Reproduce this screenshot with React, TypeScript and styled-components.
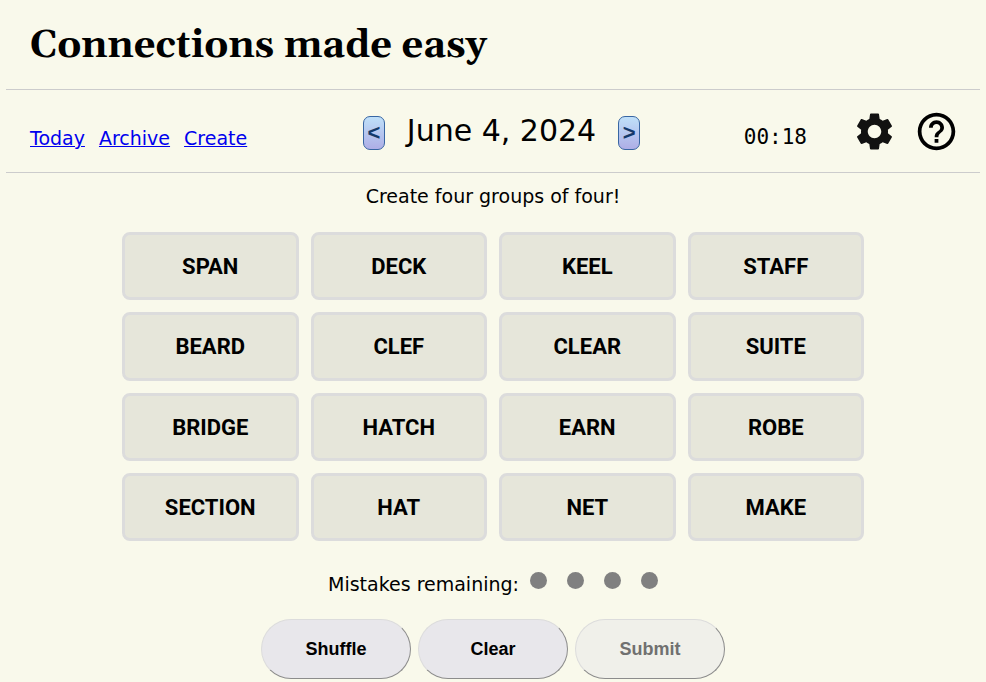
import React, { useState } from "react";
import styled, { createGlobalStyle } from "styled-components";
import { MdHelpOutline, MdSettings } from "react-icons/md";

const GlobalStyle = createGlobalStyle`
  *, *::before, *::after { box-sizing: border-box; }
  body {
    margin: 0;
    background: #f9f9eb;
    color: #000;
    font-family: "DejaVu Sans", Verdana, sans-serif;
    font-size: 19px;
    line-height: 24px;
  }
`;

const Page = styled.div`
  padding: 0 6px;
`;

const TitleBar = styled.header`
  padding: 18px 24px 15px;
  border-bottom: 1px solid #ccc;
`;

const Title = styled.h1`
  margin: 0;
  font-family: Gelasio, Georgia, serif;
  font-size: 38px;
  line-height: 56px;
  font-weight: 700;
`;

const Toolbar = styled.div`
  display: grid;
  grid-template-columns: 1fr auto 1fr;
  align-items: center;
  min-height: 83px;
  padding: 0 21px 0 24px;
  border-bottom: 1px solid #ccc;
`;

const Nav = styled.nav`
  display: flex;
  gap: 14px;
  padding-top: 14px;
`;

const NavLink = styled.a`
  color: #00e;
  text-decoration: underline;
`;

const DatePicker = styled.div`
  display: flex;
  align-items: center;
  gap: 22px;
  padding: 3px 0 0 14px;
`;

const DateText = styled.span`
  font-size: 30px;
  line-height: 34px;
  padding-bottom: 4px;
`;

const StepButton = styled.button`
  width: 22px;
  height: 34px;
  padding: 0;
  border: 1px solid #3866a3;
  border-radius: 7px;
  background: linear-gradient(#bfe0f9, #aeaee6);
  color: #14396a;
  font: 700 22px/32px "Liberation Sans", Arial, sans-serif;
  cursor: pointer;
`;

const Tools = styled.div`
  display: flex;
  justify-content: flex-end;
  align-items: center;
`;

const Timer = styled.time`
  margin-right: 45px;
  padding-top: 12px;
  font-family: "DejaVu Sans Mono", monospace;
  font-size: 21px;
`;

const IconButton = styled.button<{ $color: string }>`
  display: flex;
  padding: 0;
  border: 0;
  background: none;
  color: ${(p) => p.$color};
  cursor: pointer;

  & + & { margin-left: 17px; }
`;

const Game = styled.main`
  display: flex;
  flex-direction: column;
  align-items: center;
`;

const Prompt = styled.p`
  margin: 11px 0 24px;
`;

const Board = styled.div`
  display: grid;
  grid-template-columns: repeat(4, 1fr);
  grid-auto-rows: 1fr;
  gap: 12px;
  width: 100%;
  max-width: 742px;
  min-height: 309px;
`;

const Tile = styled.button<{ $selected: boolean }>`
  padding: 2px 0 0;
  border: 3px solid #dcdcdc;
  border-radius: 8px;
  background: ${(p) => (p.$selected ? "#c9c8b8" : "#e6e6da")};
  color: #000;
  font: 700 22px/26px Roboto, sans-serif;
  text-transform: uppercase;
  cursor: pointer;
`;

const Mistakes = styled.div`
  display: flex;
  align-items: center;
  gap: 11px;
  margin: 31px 0 23px;
`;

const Dots = styled.div`
  display: flex;
  gap: 20px;
  padding-bottom: 7px;
`;

const Dot = styled.span`
  width: 17px;
  height: 17px;
  border-radius: 50%;
  background: #808080;
`;

const Actions = styled.div`
  display: flex;
  gap: 7px;
`;

const ActionButton = styled.button`
  width: 150px;
  height: 60px;
  border: 1px solid;
  border-color: #dcdcdc #8c8c8c #8c8c8c #dcdcdc;
  border-radius: 30px;
  background: #e8e7eb;
  color: #000;
  font: 700 18px/22px "Liberation Sans", Arial, sans-serif;
  cursor: pointer;

  &:disabled {
    background: #f0f0ea;
    color: #707070;
    cursor: default;
  }
`;

const words = [
  "Span", "Deck", "Keel", "Staff",
  "Beard", "Clef", "Clear", "Suite",
  "Bridge", "Hatch", "Earn", "Robe",
  "Section", "Hat", "Net", "Make",
];

export default function App() {
  const [tiles, setTiles] = useState(words);
  const [selected, setSelected] = useState<string[]>([]);

  const toggle = (word: string) =>
    setSelected((current) => {
      if (current.includes(word)) return current.filter((w) => w !== word);
      return current.length < 4 ? [...current, word] : current;
    });

  const shuffle = () =>
    setTiles((current) =>
      current
        .map((word) => ({ word, order: Math.random() }))
        .sort((a, b) => a.order - b.order)
        .map(({ word }) => word)
    );

  return (
    <>
      <GlobalStyle />
      <Page>
        <TitleBar>
          <Title>Connections made easy</Title>
        </TitleBar>
        <Toolbar>
          <Nav>
            <NavLink href="#today">Today</NavLink>
            <NavLink href="#archive">Archive</NavLink>
            <NavLink href="#create">Create</NavLink>
          </Nav>
          <DatePicker>
            <StepButton aria-label="Previous puzzle">&lt;</StepButton>
            <DateText>June 4, 2024</DateText>
            <StepButton aria-label="Next puzzle">&gt;</StepButton>
          </DatePicker>
          <Tools>
            <Timer>00:18</Timer>
            <IconButton $color="#111" aria-label="Settings">
              <MdSettings size={45} />
            </IconButton>
            <IconButton $color="#000" aria-label="Help">
              <MdHelpOutline size={45} />
            </IconButton>
          </Tools>
        </Toolbar>
        <Game>
          <Prompt>Create four groups of four!</Prompt>
          <Board>
            {tiles.map((word) => (
              <Tile
                key={word}
                $selected={selected.includes(word)}
                aria-pressed={selected.includes(word)}
                onClick={() => toggle(word)}
              >
                {word}
              </Tile>
            ))}
          </Board>
          <Mistakes>
            <span>Mistakes remaining:</span>
            <Dots>
              {[1, 2, 3, 4].map((n) => (
                <Dot key={n} />
              ))}
            </Dots>
          </Mistakes>
          <Actions>
            <ActionButton onClick={shuffle}>Shuffle</ActionButton>
            <ActionButton onClick={() => setSelected([])}>Clear</ActionButton>
            <ActionButton disabled={selected.length < 4}>Submit</ActionButton>
          </Actions>
        </Game>
      </Page>
    </>
  );
}
